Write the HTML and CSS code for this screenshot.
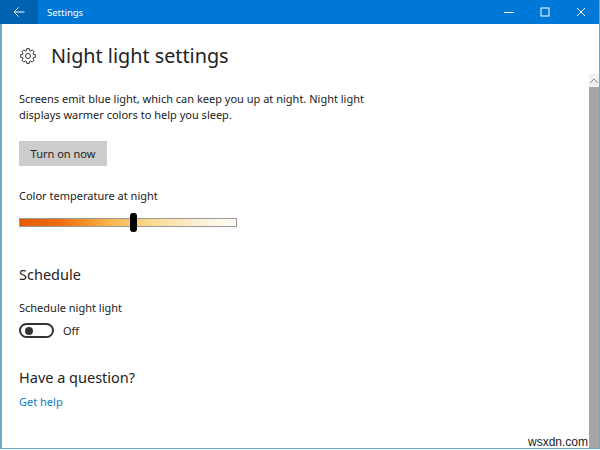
FILE: index.html
```html
<!DOCTYPE html>
<html lang="en">
<head>
    <meta charset="UTF-8">
    <title>Settings</title>
    <link rel="stylesheet" href="styles.css">
</head>
<body>

<div class="window">
    <!-- Title bar -->
    <div class="titlebar">
        <div class="back">
            <svg width="12" height="12" viewBox="0 0 12 12"><path d="M11.5 6H1M5.5 1.5L1 6l4.5 4.5" fill="none" stroke="#fff" stroke-width="1"/></svg>
        </div>
        <span class="app-name">Settings</span>
        <div class="controls">
            <span class="control"><svg width="10" height="10" viewBox="0 0 10 10"><path d="M0 5.5h10" stroke="#fff" stroke-width="1"/></svg></span>
            <span class="control"><svg width="10" height="10" viewBox="0 0 10 10"><rect x="1" y="1" width="8" height="8" fill="none" stroke="#fff" stroke-width="1"/></svg></span>
            <span class="control"><svg width="10" height="10" viewBox="0 0 10 10"><path d="M1 1l8 8M9 1l-8 8" stroke="#fff" stroke-width="1"/></svg></span>
        </div>
    </div>

    <div class="body">
        <div class="content">
            <div class="page-head">
                <svg class="gear" width="16" height="16" viewBox="0 0 16 16">
                    <polygon points="6.43,2.52 6.7,.61 9.3,.61 9.57,2.52 10.77,3.02 12.31,1.86 14.14,3.69 12.98,5.23 13.48,6.43 15.39,6.7 15.39,9.3 13.48,9.57 12.98,10.77 14.14,12.31 12.31,14.14 10.77,12.98 9.57,13.48 9.3,15.39 6.7,15.39 6.43,13.48 5.23,12.98 3.69,14.14 1.86,12.31 3.02,10.77 2.52,9.57 .61,9.3 .61,6.7 2.52,6.43 3.02,5.23 1.86,3.69 3.69,1.86 5.23,3.02" fill="none" stroke="#333" stroke-width="1"/>
                    <circle cx="8" cy="8" r="2.5" fill="none" stroke="#333" stroke-width="1"/>
                </svg>
                <h1>Night light settings</h1>
            </div>

            <p class="intro">Screens emit blue light, which can keep you up at night. Night light displays warmer colors to help you sleep.</p>

            <button class="btn">Turn on now</button>

            <p class="label temp-label">Color temperature at night</p>
            <div class="slider">
                <span class="thumb"></span>
            </div>

            <h2 class="schedule">Schedule</h2>
            <p class="label">Schedule night light</p>
            <div class="toggle-row">
                <span class="toggle"><span class="knob"></span></span>
                <span class="toggle-text">Off</span>
            </div>

            <h2 class="question">Have a question?</h2>
            <a class="help" href="#">Get help</a>
        </div>

        <!-- Scrollbar -->
        <div class="scrollbar">
            <div class="arrow">
                <svg width="10" height="6" viewBox="0 0 10 6"><path d="M1 5l4-4 4 4" fill="none" stroke="#8a8a8a" stroke-width="1"/></svg>
            </div>
            <div class="track"></div>
        </div>
    </div>
</div>

<span class="watermark">wsxdn.com</span>

</body>
</html>
```

FILE: styles.css
```css
* {
    box-sizing: border-box;
}
html, body {
    height: 100%;
}
body {
    margin: 0;
    font-family: "Noto Sans", "Liberation Sans", sans-serif;
    background-color: #fff;
    color: #222;
    overflow: hidden;
}
.window {
    height: 449px;
    display: flex;
    flex-direction: column;
    border-left: 2px solid #6fa8c8;
    border-bottom: 1px solid #6fa8c8;
    border-right: 1px solid #6fa8c8;
}
.titlebar {
    height: 24px;
    margin-left: -2px;
    background-color: #0078d7;
    display: flex;
    align-items: center;
    color: #fff;
    flex-shrink: 0;
}
.back {
    width: 38px;
    height: 24px;
    background-color: #0063b1;
    display: flex;
    align-items: center;
    justify-content: center;
}
.app-name {
    margin-left: 9px;
    font-size: 9.5px;
}
.controls {
    margin-left: auto;
    display: flex;
}
.control {
    width: 36px;
    height: 24px;
    display: flex;
    align-items: center;
    justify-content: center;
}
.body {
    flex: 1;
    display: flex;
    min-height: 0;
}
.content {
    flex: 1;
    padding: 15px 0 0 17px;
}
.page-head {
    display: flex;
    align-items: center;
    height: 33px;
}
.gear {
    margin: 0 15px 0 1px;
}
h1 {
    margin: 0;
    font-size: 19.8px;
    font-weight: 400;
}
.intro {
    margin: 19px 0 0;
    width: 370px;
    font-size: 11px;
    line-height: 16px;
}
.btn {
    display: block;
    margin-top: 18px;
    width: 88px;
    height: 25px;
    border: none;
    padding: 0;
    background-color: #ccc;
    color: #222;
    font-family: inherit;
    font-size: 11px;
}
.label {
    margin: 0;
    font-size: 11px;
    line-height: 16px;
}
.temp-label {
    margin-top: 22px;
}
.slider {
    position: relative;
    margin-top: 14px;
    width: 218px;
    height: 9px;
    border: 1px solid #999;
    background: linear-gradient(to right, #e85d04 0%, #ef6c0c 18%, #f7b64c 42%, #fad98f 60%, #fdf0d5 82%, #fffdf8 100%);
}
.thumb {
    position: absolute;
    left: 110px;
    top: -6px;
    width: 7px;
    height: 19px;
    border-radius: 3px;
    background-color: #000;
}
h2 {
    margin: 0;
    font-size: 14.5px;
    font-weight: 400;
}
.schedule {
    margin-top: 37px;
    line-height: 20px;
}
.schedule + .label {
    margin-top: 16px;
}
.toggle-row {
    display: flex;
    align-items: center;
    margin-top: 7px;
}
.toggle {
    display: flex;
    align-items: center;
    width: 35px;
    height: 15px;
    padding-left: 4px;
    border: 2px solid #333;
    border-radius: 8px;
}
.knob {
    width: 8px;
    height: 8px;
    border-radius: 50%;
    background-color: #333;
}
.toggle-text {
    margin-left: 9px;
    font-size: 11px;
}
.question {
    margin-top: 29px;
    line-height: 20px;
}
.help {
    display: block;
    margin-top: 7px;
    font-size: 11px;
    line-height: 16px;
    color: #0a7cc4;
    text-decoration: none;
}
.scrollbar {
    width: 10px;
    margin-top: 50px;
    display: flex;
    flex-direction: column;
    background-color: #f0f0f0;
}
.arrow {
    height: 13px;
    display: flex;
    align-items: center;
    justify-content: center;
}
.track {
    flex: 1;
    background-color: #a6a6a6;
}
.watermark {
    position: absolute;
    right: 12px;
    bottom: 2px;
    font-family: "Liberation Sans", sans-serif;
    font-size: 12px;
    line-height: 12px;
    color: #222;
}
```
